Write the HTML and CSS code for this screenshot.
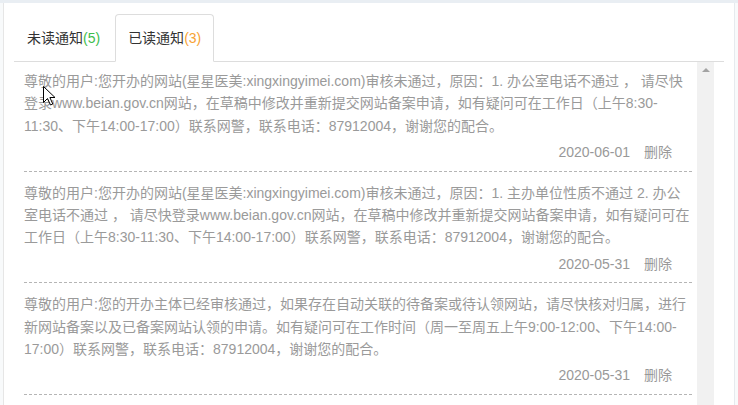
FILE: index.html
```html
<!DOCTYPE html>
<html lang="zh-CN">
<head>
<meta charset="utf-8">
<title>消息通知</title>
<link rel="stylesheet" href="styles.css">
</head>
<body>
<div class="page">
  <div class="card">
    <div class="tabs">
      <div class="tab">未读通知<span class="count-unread">(5)</span></div>
      <div class="tab active">已读通知<span class="count-read">(3)</span></div>
    </div>
    <div class="notice-box">
      <div class="notice-list">
        <div class="notice">
          <p class="notice-text">尊敬的用户:您开办的网站(星星医美:xingxingyimei.com)审核未通过，原因：1. 办公室电话不通过 ， 请尽快<br>登录www.beian.gov.cn网站，在草稿中修改并重新提交网站备案申请，如有疑问可在工作日（上午8:30-<br>11:30、下午14:00-17:00）联系网警，联系电话：87912004，谢谢您的配合。</p>
          <div class="notice-meta"><span class="date">2020-06-01</span><a class="del">删除</a></div>
        </div>
        <div class="notice">
          <p class="notice-text">尊敬的用户:您开办的网站(星星医美:xingxingyimei.com)审核未通过，原因：1. 主办单位性质不通过 2. 办公<br>室电话不通过 ， 请尽快登录www.beian.gov.cn网站，在草稿中修改并重新提交网站备案申请，如有疑问可在<br>工作日（上午8:30-11:30、下午14:00-17:00）联系网警，联系电话：87912004，谢谢您的配合。</p>
          <div class="notice-meta"><span class="date">2020-05-31</span><a class="del">删除</a></div>
        </div>
        <div class="notice">
          <p class="notice-text">尊敬的用户:您的开办主体已经审核通过，如果存在自动关联的待备案或待认领网站，请尽快核对归属，进行<br>新网站备案以及已备案网站认领的申请。如有疑问可在工作时间（周一至周五上午9:00-12:00、下午14:00-<br>17:00）联系网警，联系电话：87912004，谢谢您的配合。</p>
          <div class="notice-meta"><span class="date">2020-05-31</span><a class="del">删除</a></div>
        </div>
      </div>
      <div class="scrollbar"><span class="scroll-up"></span></div>
    </div>
  </div>
</div>
<svg class="cursor" width="13" height="20" viewBox="0 0 13 20"><path d="M0.5 0.5 L0.5 16.5 L4.5 12.5 L7.5 19 L9.8 18 L6.9 11.5 L12 11.5 Z" fill="#fff" stroke="#000" stroke-width="1" stroke-linejoin="miter"/></svg>
</body>
</html>
```
FILE: styles.css
```css
html, body {
  margin: 0;
  padding: 0;
}
body {
  background: #f8fafb;
  font-family: "Liberation Sans", Arial, "Noto Sans CJK SC", sans-serif;
  font-size: 14px;
  position: relative;
  height: 405px;
  overflow: hidden;
}
.page {
  border-top: 3px solid #e9eef3;
  height: 402px;
}
.card {
  margin-left: 3px;
  width: 710px;
  height: 391px;
  padding: 11px 10px 0 10px;
  background: #fff;
  border-left: 1px solid #e6e6e6;
  border-right: 1px solid #e6eaee;
}
.tabs {
  display: flex;
  border-bottom: 1px solid #dddddd;
}
.tab {
  padding: 0 12px;
  line-height: 46px;
  border: 1px solid transparent;
  border-radius: 4px 4px 0 0;
  margin-right: 2px;
  margin-bottom: -1px;
  color: #333;
  white-space: nowrap;
}
.tab.active {
  border-color: #dddddd;
  border-bottom-color: #fff;
  background: #fff;
}
.count-unread { color: #3dbd4d; }
.count-read { color: #f7a334; }
.notice-box {
  display: flex;
  height: 343px;
  margin-right: 10px;
  overflow: hidden;
}
.notice-list {
  flex: 1;
  padding: 0 5px 0 10px;
}
.notice {
  padding-top: 10px;
  border-bottom: 1px dashed #b5b5b5;
}
.notice:first-child {
  padding-top: 8px;
}
.notice-text {
  margin: 0;
  line-height: 22.4px;
  color: #9a9a9a;
  white-space: nowrap;
}
.notice-meta {
  margin-top: 4px;
  padding: 0 20px 7px 0;
  line-height: 22.4px;
  text-align: right;
  color: #999;
}
.del {
  margin-left: 14px;
  color: #999;
  cursor: pointer;
}
.scrollbar {
  width: 17px;
  background: #f1f1f1;
  display: flex;
  justify-content: center;
  padding-top: 6px;
  box-sizing: border-box;
}
.scroll-up {
  width: 0;
  height: 0;
  border-left: 4px solid transparent;
  border-right: 4px solid transparent;
  border-bottom: 4px solid #a3a3a3;
}
.cursor {
  position: absolute;
  left: 43px;
  top: 86px;
}
```
